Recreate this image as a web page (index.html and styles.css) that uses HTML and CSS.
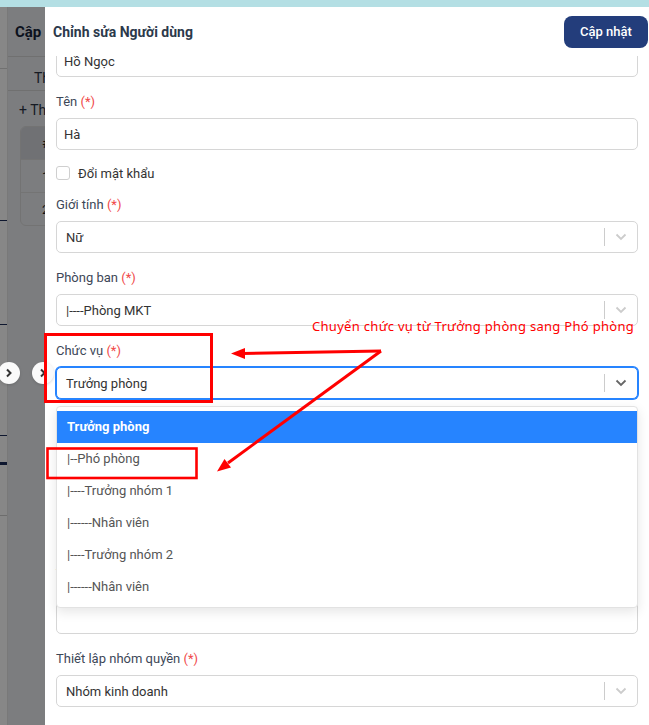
FILE: index.html
```html
<!DOCTYPE html>
<html lang="vi">
<head>
    <meta charset="UTF-8">
    <meta name="viewport" content="width=device-width, initial-scale=1.0">
    <title>Chỉnh sửa Người dùng</title>
    <link rel="stylesheet" href="styles.css">
</head>
<body>
    <div class="browser-strip"></div>

    <div class="screen">
        <!-- trang nền phía sau drawer -->
        <div class="under">
            <div class="under-rail">
                <div class="rail-line line-1"></div>
                <div class="rail-line line-2"></div>
                <div class="rail-line line-3"></div>
                <div class="rail-line line-4"></div>
                <div class="rail-line line-5"></div>
                <div class="rail-line line-6"></div>
            </div>
            <div class="under-main">
                <div class="under-title">Cập nhật người dùng</div>
                <div class="under-tabs">Thông tin</div>
                <div class="under-add">+ Thêm mới</div>
                <div class="under-table">
                    <div class="under-row head">#</div>
                    <div class="under-row">1</div>
                    <div class="under-row">2</div>
                </div>
            </div>
            <div class="dim"></div>
        </div>

        <aside class="drawer">
            <header class="drawer-head">
                <h1>Chỉnh sửa Người dùng</h1>
                <button class="btn-primary">Cập nhật</button>
            </header>

            <div class="drawer-body">
                <form class="form">
                    <div class="field">
                        <input class="text-input" type="text" value="Hồ Ngọc">
                    </div>

                    <div class="field">
                        <label class="field-label">Tên <span class="req">(*)</span></label>
                        <input class="text-input" type="text" value="Hà">
                    </div>

                    <div class="check-row">
                        <span class="checkbox"></span>
                        <span>Đổi mật khẩu</span>
                    </div>

                    <div class="field">
                        <label class="field-label">Giới tính <span class="req">(*)</span></label>
                        <div class="select">
                            <span class="select-value">Nữ</span>
                            <span class="select-sep"></span>
                            <span class="select-ind">
                                <svg width="12" height="8" viewBox="0 0 12 8"><path d="M1.5 1.5 6 6l4.5-4.5" fill="none" stroke="currentColor" stroke-width="1.8"/></svg>
                            </span>
                        </div>
                    </div>

                    <div class="field">
                        <label class="field-label">Phòng ban <span class="req">(*)</span></label>
                        <div class="select">
                            <span class="select-value">|----Phòng MKT</span>
                            <span class="select-sep"></span>
                            <span class="select-ind">
                                <svg width="12" height="8" viewBox="0 0 12 8"><path d="M1.5 1.5 6 6l4.5-4.5" fill="none" stroke="currentColor" stroke-width="1.8"/></svg>
                            </span>
                        </div>
                    </div>

                    <div class="field has-menu">
                        <label class="field-label">Chức vụ <span class="req">(*)</span></label>
                        <div class="select focused">
                            <span class="select-value">Trưởng phòng</span>
                            <span class="select-sep"></span>
                            <span class="select-ind">
                                <svg width="12" height="8" viewBox="0 0 12 8"><path d="M1.5 1.5 6 6l4.5-4.5" fill="none" stroke="currentColor" stroke-width="1.8"/></svg>
                            </span>
                        </div>
                        <ul class="select-menu">
                            <li class="option active">Trưởng phòng</li>
                            <li class="option">|--Phó phòng</li>
                            <li class="option">|----Trưởng nhóm 1</li>
                            <li class="option">|------Nhân viên</li>
                            <li class="option">|----Trưởng nhóm 2</li>
                            <li class="option">|------Nhân viên</li>
                        </ul>
                    </div>

                    <div class="field">
                        <label class="field-label">Email <span class="req">(*)</span></label>
                        <input class="text-input" type="text" value="">
                    </div>

                    <div class="field">
                        <label class="field-label">Số điện thoại</label>
                        <input class="text-input" type="text" value="">
                    </div>

                    <div class="field">
                        <label class="field-label">Địa chỉ</label>
                        <textarea class="text-area"></textarea>
                    </div>

                    <div class="field">
                        <label class="field-label">Thiết lập nhóm quyền <span class="req">(*)</span></label>
                        <div class="select">
                            <span class="select-value">Nhóm kinh doanh</span>
                            <span class="select-sep"></span>
                            <span class="select-ind">
                                <svg width="12" height="8" viewBox="0 0 12 8"><path d="M1.5 1.5 6 6l4.5-4.5" fill="none" stroke="currentColor" stroke-width="1.8"/></svg>
                            </span>
                        </div>
                    </div>
                </form>
            </div>
        </aside>
    </div>

    <!-- nút chuyển slide của trang nền -->
    <span class="nav-dot dot-a">
        <svg width="8" height="10" viewBox="0 0 8 10"><path d="M2 1.5 5.5 5 2 8.5" fill="none" stroke="#333" stroke-width="2"/></svg>
    </span>
    <span class="nav-dot dot-b">
        <svg width="8" height="10" viewBox="0 0 8 10"><path d="M2 1.5 5.5 5 2 8.5" fill="none" stroke="#333" stroke-width="2"/></svg>
    </span>

    <!-- ghi chú đỏ -->
    <svg class="marks" width="649" height="725" viewBox="0 0 649 725">
        <rect x="45.5" y="334.5" width="166" height="67" fill="none" stroke="#f00" stroke-width="3"/>
        <rect x="47.5" y="448.5" width="149" height="29.5" fill="none" stroke="#f00" stroke-width="2.6"/>
        <line x1="381" y1="351" x2="242" y2="353.5" stroke="#f00" stroke-width="3"/>
        <polygon points="231,353.5 245,348 245,359" fill="#f00"/>
        <line x1="381" y1="351" x2="228" y2="463" stroke="#f00" stroke-width="3"/>
        <polygon points="217,471.5 224.5,459 231,467.5" fill="#f00"/>
    </svg>
    <p class="marks-note">Chuyển chức vụ từ Trưởng phòng sang Phó phòng</p>
</body>
</html>
```

FILE: styles.css
```css
* {
    box-sizing: border-box;
}

body {
    margin: 0;
    width: 649px;
    height: 725px;
    overflow: hidden;
    font-family: Roboto, 'Liberation Sans', sans-serif;
    font-size: 13px;
    color: #333;
    background: #fff;
    position: relative;
}

.browser-strip {
    height: 7px;
    background: #b4dfe4;
}

.screen {
    display: flex;
    height: 718px;
}

/* ---- trang phía sau ---- */
.under {
    width: 45px;
    flex-shrink: 0;
    display: flex;
    position: relative;
    overflow: hidden;
    background: #fff;
}

.under-rail {
    width: 8px;
    flex-shrink: 0;
    background: #fff;
    border-right: 1px solid #e4e4e4;
}

.rail-line {
    height: 1px;
    background: #1c2d5a;
}

.line-1 { margin-top: 61px; background: #d6d6d6; }
.line-2 { margin-top: 151px; }
.line-3 { margin-top: 103px; }
.line-4 { margin-top: 110px; }
.line-5 { margin-top: 26px; height: 3px; }
.line-6 { margin-top: 50px; background: #cfcfcf; }

.under-main {
    flex: 1;
    background: #ebedf0;
    white-space: nowrap;
    overflow: hidden;
}

.under-title {
    height: 50px;
    line-height: 50px;
    padding-left: 7px;
    font-size: 15px;
    font-weight: 700;
    color: #16233a;
    border-bottom: 1px solid #d4d4d4;
}

.under-tabs {
    height: 34px;
    padding: 7px 0 0 26px;
    line-height: 28px;
    color: #2b3445;
    font-size: 14px;
    border-bottom: 1px solid #d4d4d4;
}

.under-add {
    height: 35px;
    line-height: 38px;
    padding-left: 11px;
    color: #2b3445;
    font-size: 14px;
}

.under-table {
    margin-left: 12px;
    width: 60px;
    border: 1px solid #d9d9d9;
    border-radius: 6px;
    overflow: hidden;
}

.under-row {
    height: 33px;
    line-height: 33px;
    padding-left: 21px;
    color: #222;
    border-top: 1px solid #dcdcdc;
}

.under-row.head {
    border-top: none;
    background: #d3d6db;
    height: 32px;
}

.dim {
    position: absolute;
    inset: 0;
    background: rgba(0, 0, 0, 0.47);
}

/* ---- drawer ---- */
.drawer {
    flex: 1;
    display: flex;
    flex-direction: column;
    background: #fff;
    overflow: hidden;
}

.drawer-head {
    height: 49px;
    flex-shrink: 0;
    display: flex;
    align-items: center;
    justify-content: space-between;
    padding: 0 1px 0 8px;
    background: #fff;
    position: relative;
    z-index: 2;
}

.drawer-head h1 {
    margin: 0;
    font-size: 14px;
    font-weight: 700;
    color: #2c394b;
}

.btn-primary {
    height: 32px;
    width: 84px;
    border: none;
    border-radius: 8px;
    background: #233d7b;
    color: #fff;
    font-family: Roboto, 'Liberation Sans', sans-serif;
    font-size: 13px;
    font-weight: 500;
    cursor: pointer;
}

.drawer-body {
    flex: 1;
    overflow: hidden;
    padding: 0 11px;
}

.form {
    margin-top: -11px;
}

.field {
    margin-bottom: 14px;
}

.field.has-menu {
    position: relative;
}

.field-label {
    display: block;
    line-height: 21px;
    margin-bottom: 6px;
    color: #3d4757;
}

.req {
    color: #f04848;
}

.text-input {
    display: block;
    width: 100%;
    height: 32px;
    border: 1px solid #d6d6d6;
    border-radius: 5px;
    padding: 0 7px;
    font-family: Roboto, 'Liberation Sans', sans-serif;
    font-size: 13px;
    color: #333;
    outline: none;
}

.text-area {
    display: block;
    width: 100%;
    height: 48px;
    border: 1px solid #d6d6d6;
    border-radius: 5px;
    resize: none;
    outline: none;
}

.check-row {
    display: flex;
    align-items: center;
    gap: 8px;
    height: 18px;
    margin-bottom: 12px;
    color: #333;
}

.checkbox {
    width: 14px;
    height: 14px;
    border: 1px solid #cfcfcf;
    border-radius: 3px;
}

.select {
    display: flex;
    align-items: center;
    height: 32px;
    border: 1px solid #d6d6d6;
    border-radius: 5px;
    background: #fff;
}

.select.focused {
    border-color: #2684ff;
    box-shadow: 0 0 0 1px #2684ff;
}

.select-value {
    flex: 1;
    padding-left: 9px;
    color: #333;
}

.select-sep {
    width: 1px;
    height: 18px;
    background: #cccccc;
}

.select-ind {
    width: 32px;
    display: flex;
    justify-content: center;
    color: #cccccc;
}

.select.focused .select-ind {
    color: #666;
}

.select-menu {
    position: absolute;
    left: 0;
    right: 0;
    top: calc(100% + 7px);
    margin: 0;
    padding: 4px 0;
    list-style: none;
    background: #fff;
    border: 1px solid #e2e2e2;
    border-radius: 4px;
    box-shadow: 0 4px 12px rgba(0, 0, 0, 0.1);
    z-index: 5;
}

.option {
    height: 32px;
    line-height: 32px;
    padding-left: 10px;
    color: #555;
}

.option.active {
    background: #2684ff;
    color: #fff;
    font-weight: 700;
}

/* ---- nút tròn & ghi chú ---- */
.nav-dot {
    position: absolute;
    top: 362px;
    width: 22px;
    height: 22px;
    border-radius: 50%;
    background: #fafafa;
    box-shadow: 0 1px 3px rgba(0, 0, 0, 0.15);
    display: flex;
    align-items: center;
    justify-content: center;
    z-index: 8;
}

.dot-a {
    left: -2px;
}

.dot-b {
    left: 32px;
}

.marks {
    position: absolute;
    top: 0;
    left: 0;
    pointer-events: none;
    z-index: 10;
}

.marks-note {
    position: absolute;
    left: 312px;
    top: 317px;
    margin: 0;
    font-family: 'Noto Sans', 'DejaVu Sans', sans-serif;
    font-size: 13px;
    letter-spacing: 0.3px;
    line-height: 18px;
    color: #f00;
    white-space: nowrap;
    z-index: 10;
}
```
